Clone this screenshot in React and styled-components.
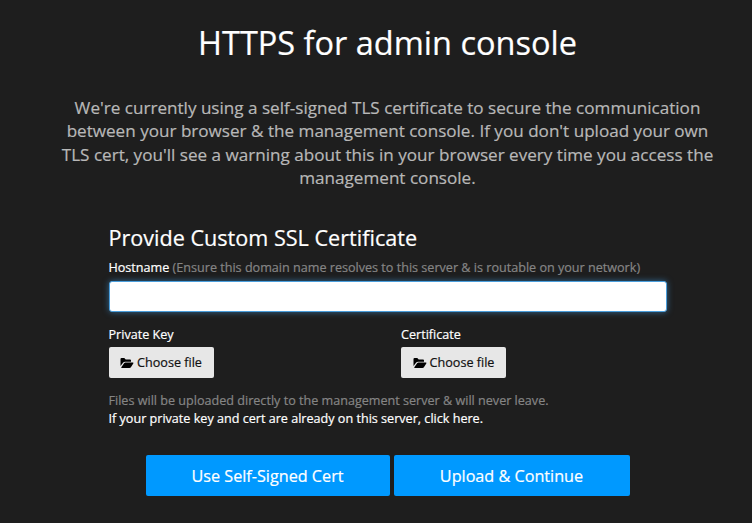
import React from "react";
import styled, { createGlobalStyle } from "styled-components";

const GlobalStyle = createGlobalStyle`
  *, *::before, *::after { box-sizing: border-box; }
  body { margin: 0; background: #1e1e1e; color: #fff; font-family: "Open Sans", sans-serif; overflow: hidden; -webkit-text-stroke: 0.2px; }
`;
const Page = styled.main`
  height: 523px;
  padding: 21px 0 0 23px;
  display: flex;
  flex-direction: column;
  align-items: center;
`;
const Title = styled.h1`
  margin: 0;
  font-size: 32.5px;
  line-height: 44px;
  font-weight: 400;
  white-space: nowrap;
`;
const Intro = styled.p`
  margin: 31px 0 0;
  font-size: 17.1px;
  line-height: 23.4px;
  text-align: center;
  color: #b8b8b8;
  white-space: nowrap;
`;
const Form = styled.form`
  width: 558px;
  margin-top: 31.4px;
  display: flex;
  flex-direction: column;
`;
const Heading = styled.h2`
  margin: 0 0 4px;
  font-size: 21.6px;
  line-height: 34px;
  font-weight: 400;
`;
const Label = styled.label`
  font-size: 12.6px;
  line-height: 18px;
  white-space: nowrap;
`;
const Hint = styled.span`
  color: #858585;
`;
const HostInput = styled.input`
  height: 31px;
  margin-top: 4px;
  border: 1px solid #4a9edc;
  border-radius: 3px;
  background: #fff;
  outline: none;
  box-shadow: 0 0 6px rgba(60, 150, 220, 0.6);
`;
const Files = styled.div`
  display: grid;
  grid-template-columns: 292.5px 1fr;
  margin-top: 14px;
`;
const FileField = styled.div`
  display: flex;
  flex-direction: column;
  align-items: flex-start;
`;
const FileButton = styled.button`
  width: 105px;
  height: 31px;
  margin-top: 3px;
  padding: 0;
  display: flex;
  align-items: center;
  justify-content: center;
  gap: 3px;
  border: 0;
  border-radius: 2px;
  background: #e7e7e7;
  color: #111;
  font: 400 12.6px "Open Sans", sans-serif;
`;
const FolderSvg = styled.svg`
  width: 14px;
  height: 12px;
  fill: #000;
`;
const Note = styled.p`
  margin: 14px 0 0;
  font-size: 12.6px;
  line-height: 18px;
  color: #858585;
  white-space: nowrap;
`;
const KeyLink = styled.a`
  color: #fff;
`;
const Actions = styled.div`
  display: flex;
  justify-content: center;
  gap: 4px;
  margin-top: 27px;
`;
const Action = styled.button`
  width: ${(p) => p.$width}px;
  height: 41px;
  padding: 0;
  border: 0;
  border-radius: 2px;
  background: #0099ff;
  color: #fff;
  font: 400 16.2px "Open Sans", sans-serif;
`;

function FolderIcon() {
  return (
    <FolderSvg viewBox="0 0 14 12" aria-hidden="true">
      <path d="M.5 9V2Q.5 1 1.5 1H4.3L5.7 2.5H10Q11 2.5 11 3.5V4.8H5.2Q3.8 4.8 3 5.8Z" />
      <path d="M4.3 6.1Q4.7 5.6 5.4 5.6H12.8Q13.9 5.6 13.3 6.5L10.9 10.2Q10.4 11 9.5 11H1.8Q.9 11 1.3 10.3Z" />
    </FolderSvg>
  );
}

function FilePicker({ label }) {
  return (
    <FileField>
      <Label>{label}</Label>
      <FileButton type="button"><FolderIcon />Choose file</FileButton>
    </FileField>
  );
}

export default function App() {
  return (
    <>
      <GlobalStyle />
      <Page>
        <Title>HTTPS for admin console</Title>
        <Intro>
          We're currently using a self-signed TLS certificate to secure the communication<br />
          between your browser &amp; the management console. If you don't upload your own<br />
          TLS cert, you'll see a warning about this in your browser every time you access the<br />
          management console.
        </Intro>
        <Form>
          <Heading>Provide Custom SSL Certificate</Heading>
          <Label htmlFor="host">Hostname <Hint>(Ensure this domain name resolves to this server &amp; is routable on your network)</Hint></Label>
          <HostInput id="host" />
          <Files>
            <FilePicker label="Private Key" />
            <FilePicker label="Certificate" />
          </Files>
          <Note>
            Files will be uploaded directly to the management server &amp; will never leave.<br />
            <KeyLink>If your private key and cert are already on this server, click here.</KeyLink>
          </Note>
          <Actions>
            <Action type="button" $width={244}>Use Self-Signed Cert</Action>
            <Action type="button" $width={236}>Upload &amp; Continue</Action>
          </Actions>
        </Form>
      </Page>
    </>
  );
}
